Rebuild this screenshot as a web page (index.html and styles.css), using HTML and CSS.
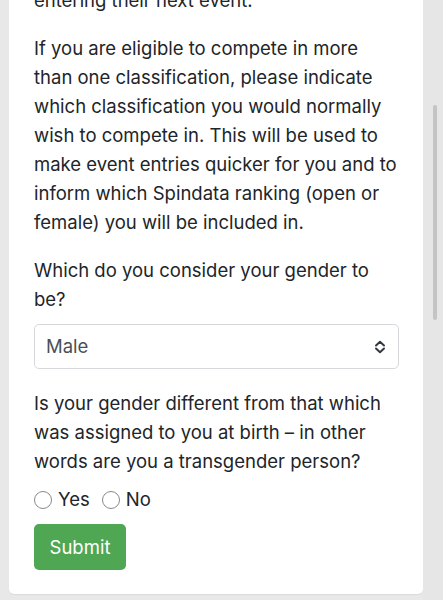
FILE: index.html
```html
<!DOCTYPE html>
<html lang="en">
<head>
<meta charset="utf-8">
<title>Gender classification</title>
<link rel="stylesheet" href="styles.css">
</head>
<body>
<div class="page">
  <main class="card">
    <p class="para">entering their next event.</p>
    <p class="para">If you are eligible to compete in more than one classification, please indicate which classification you would normally wish to compete in. This will be used to make event entries quicker for you and to inform which Spindata ranking (open or female) you will be included in.</p>
    <p class="para q">Which do you consider your gender to be?</p>
    <div class="select">
      <span class="select-value">Male</span>
      <svg class="chev" width="12" height="14" viewBox="0 0 12 14" aria-hidden="true"><path d="M2 5.5 L6 1.8 L10 5.5 M2 8.5 L6 12.2 L10 8.5" fill="none" stroke="#343a40" stroke-width="2" stroke-linecap="round" stroke-linejoin="round"/></svg>
    </div>
    <p class="para q2">Is your gender different from that which was assigned to you at birth – in other words are you a transgender person?</p>
    <div class="radios">
      <label class="radio"><span class="circle"></span>Yes</label>
      <label class="radio"><span class="circle"></span>No</label>
    </div>
    <button class="btn" type="button">Submit</button>
  </main>
  <div class="track"><div class="thumb"></div></div>
</div>
</body>
</html>
```
FILE: styles.css
```css
html, body {
  margin: 0;
  padding: 0;
  height: 600px;
  overflow: hidden;
  background: #e8e8e8;
}
body {
  font-family: Inter, "Liberation Sans", Arial, sans-serif;
  font-size: 18.5px;
  line-height: 29px;
  color: #212529;
}
.page {
  display: flex;
  align-items: flex-start;
}
.card {
  margin-left: 9px;
  width: 414px;
  box-sizing: border-box;
  background: #fff;
  border-radius: 0 0 5px 5px;
  margin-top: -14px;
  padding: 0 24px 24px 25px;
  box-shadow: 0 1px 1px rgba(0,0,0,0.06);
}
.para {
  margin: 0 0 19px 0;
}
.q {
  margin-bottom: 10px;
}
.select {
  height: 45px;
  box-sizing: border-box;
  border: 1px solid #d6d8dc;
  border-radius: 5px;
  display: flex;
  align-items: center;
  justify-content: space-between;
  padding: 0 12px 0 11px;
  margin-bottom: 20px;
  color: #495057;
}
.chev { display: block; }
.q2 { margin-bottom: 9px; }
.radios {
  display: flex;
  gap: 12px;
  height: 29px;
  align-items: center;
  margin-bottom: 10px;
}
.radio {
  display: flex;
  align-items: center;
  gap: 6px;
}
.circle {
  box-sizing: border-box;
  width: 18px;
  height: 18px;
  border: 1.5px solid #8a8a8e;
  border-radius: 50%;
}
.btn {
  display: block;
  font: inherit;
  color: #fff;
  background: #4fa653;
  border: none;
  border-radius: 5px;
  width: 92px;
  height: 46px;
  padding: 0;
}
.track {
  flex: 1;
  height: 600px;
  background: #e6e6e6;
  display: flex;
  justify-content: center;
  padding-left: 3px;
}
.thumb {
  margin-top: 105px;
  width: 4px;
  height: 215px;
  border-radius: 2px;
  background: #c4c4c4;
}
```
